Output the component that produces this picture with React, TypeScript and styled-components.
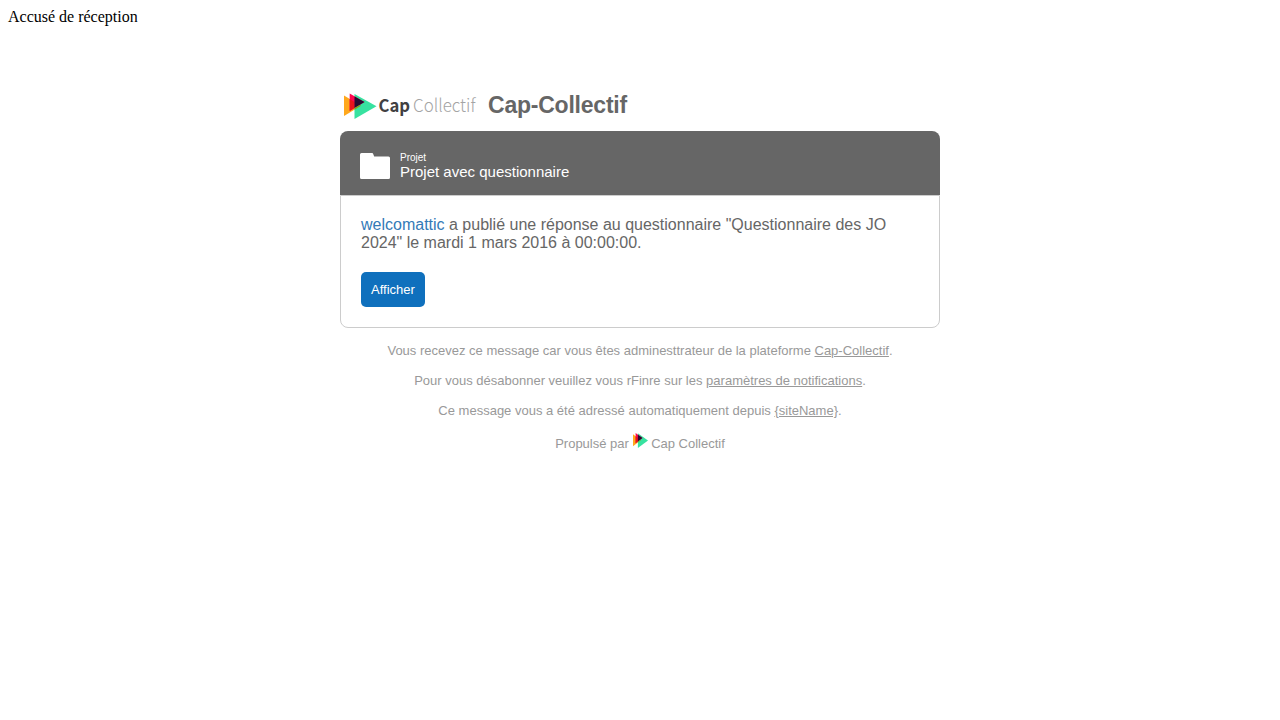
import React from 'react';
import styled, { createGlobalStyle } from 'styled-components';

const GlobalStyle = createGlobalStyle`
  body {
    margin: 0;
    background: #fff;
  }
`;

const Page = styled.div`
  padding: 8px;
  font: 16px/18px 'Liberation Serif', 'Times New Roman', serif;
  color: #000;
`;

const Mail = styled.main`
  width: 600px;
  margin: 54px auto 0;
  font-family: 'Liberation Sans', Helvetica, Arial, sans-serif;
  color: #666;
`;

const Brand = styled.header`
  display: flex;
  align-items: flex-start;
  gap: 8px;
  height: 51px;
`;

const Logo = styled.svg`
  display: block;
  flex: none;
  overflow: visible;
`;

const SiteName = styled.h1`
  margin: 0;
  padding-top: 12px;
  font-size: 23px;
  line-height: 26px;
  letter-spacing: -0.22px;
  font-weight: bold;
`;

const ProjectBar = styled.div`
  box-sizing: border-box;
  display: flex;
  align-items: flex-start;
  gap: 10px;
  height: 64px;
  padding: 20px;
  border-radius: 8px 8px 0 0;
  background: #666;
  color: #fff;
`;

const FolderIcon = styled.svg`
  display: block;
  margin-top: 2px;
`;

const ProjectLabel = styled.div`
  padding-top: 1px;
  font-size: 10px;
  line-height: 11px;
`;

const ProjectTitle = styled.div`
  font-size: 15px;
  line-height: 17px;
`;

const Card = styled.section`
  box-sizing: border-box;
  height: 133px;
  padding: 20px;
  border: 1px solid #ccc;
  border-radius: 0 0 8px 8px;
`;

const Message = styled.p`
  margin: 0 0 20px;
  font-size: 16px;
  line-height: 18px;
`;

const Author = styled.a`
  color: #337ab7;
  text-decoration: none;
`;

const Button = styled.a`
  display: inline-block;
  padding: 10px;
  border-radius: 5px;
  background: #0f70bd;
  color: #fff;
  font-size: 13px;
  line-height: 15px;
`;

const Footer = styled.footer`
  padding-top: 15px;
  color: #999;
  font-size: 13px;
  line-height: 15px;
  text-align: center;
`;

const Notice = styled.p`
  margin: 0 0 15px;
`;

const FooterLink = styled.a`
  color: inherit;
  text-decoration: underline;
`;

const Mark = styled.svg`
  vertical-align: baseline;
`;

const Triangles = () => (
  <>
    <path d="M4 15.500v20.500l17-10.200z" fill="#ffa81c" />
    <path d="M14.500 14v25L36.500 26.300z" fill="#37e2a0" />
    <path d="M9.700 13.500v17.500L24.500 22z" fill="#ff084f" />
    <path d="M9.700 19v12l4.800-2.900v-6.200z" fill="#e9151c" />
    <path d="M14.500 16.400L24.500 22 14.500 28z" fill="#270c32" />
    <path d="M14.500 28v1.700l6.500-3.900-1.200-.9z" fill="#7fa514" />
  </>
);

export default function App() {
  return (
    <Page>
      <GlobalStyle />
      <div>Accusé de réception</div>
      <Mail>
        <Brand>
          <Logo width="140" height="50" viewBox="0 0 140 50" role="img" aria-label="Cap Collectif">
            <Triangles />
            <text x="38.500" y="32.300" fontFamily="'Noto Sans CJK SC', sans-serif" fontSize="17.500" fontWeight="700" fill="#414042" textLength="31.500" lengthAdjust="spacingAndGlyphs">Cap</text>
            <text x="73" y="32.300" fontFamily="'Noto Sans CJK SC', sans-serif" fontSize="18" fontWeight="300" fill="#a4a4a4" textLength="62.500" lengthAdjust="spacingAndGlyphs">Collectif</text>
          </Logo>
          <SiteName>Cap-Collectif</SiteName>
        </Brand>
        <ProjectBar>
          <FolderIcon width="30" height="26" viewBox="0 0 30 26">
            <path d="M1.500 0h10.300c.8 0 1.200.4 1.500 1.200L14.200 3.500h14.300A1.500 1.500 0 0 1 30 5v19.500a1.500 1.500 0 0 1-1.500 1.500h-27A1.500 1.500 0 0 1 0 24.500v-23A1.500 1.500 0 0 1 1.500 0z" fill="#fff" />
          </FolderIcon>
          <div>
            <ProjectLabel>Projet</ProjectLabel>
            <ProjectTitle>Projet avec questionnaire</ProjectTitle>
          </div>
        </ProjectBar>
        <Card>
          <Message>
            <Author>welcomattic</Author> a publié une réponse au questionnaire "Questionnaire des JO 2024" le mardi 1 mars 2016 à 00:00:00.
          </Message>
          <Button>Afficher</Button>
        </Card>
        <Footer>
          <Notice>
            Vous recevez ce message car vous êtes adminesttrateur de la plateforme <FooterLink>Cap-Collectif</FooterLink>.
          </Notice>
          <Notice>
            Pour vous désabonner veuillez vous rFinre sur les <FooterLink>paramètres de notifications</FooterLink>.
          </Notice>
          <Notice>
            Ce message vous a été adressé automatiquement depuis <FooterLink>{'{siteName}'}</FooterLink>.
          </Notice>
          <Notice>
            Propulsé par{' '}
            <Mark width="15" height="15" viewBox="4 13.500 32.500 25.500" preserveAspectRatio="none">
              <Triangles />
            </Mark>{' '}
            Cap Collectif
          </Notice>
        </Footer>
      </Mail>
    </Page>
  );
}
